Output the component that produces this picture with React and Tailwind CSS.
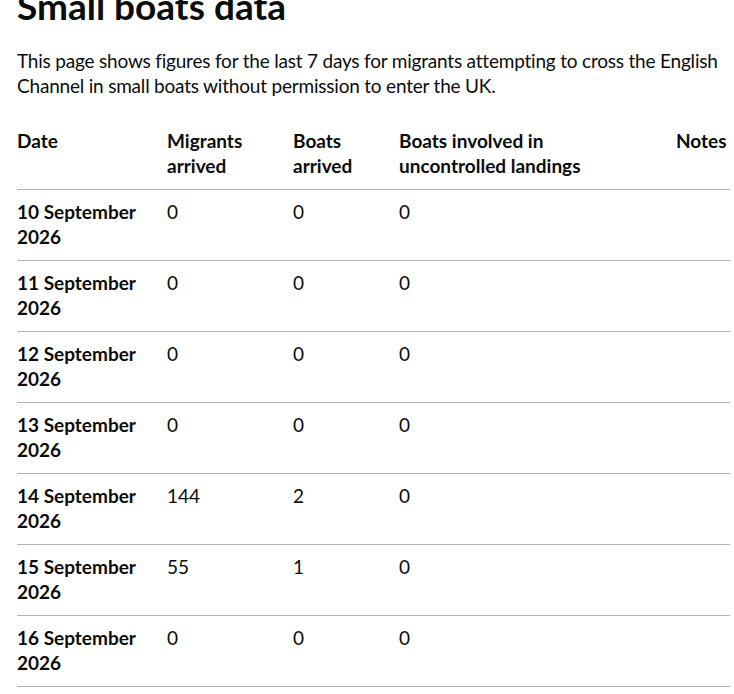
import React from "react";

const rows = [
  ["10 September 2026", "0", "0", "0"],
  ["11 September 2026", "0", "0", "0"],
  ["12 September 2026", "0", "0", "0"],
  ["13 September 2026", "0", "0", "0"],
  ["14 September 2026", "144", "2", "0"],
  ["15 September 2026", "55", "1", "0"],
  ["16 September 2026", "0", "0", "0"],
];

export default function App() {
  return (
    <div
      className="bg-white text-[#0b0c0c] pl-[17px] w-[730px] overflow-hidden"
      style={{ fontFamily: 'Lato, "Liberation Sans", Arial, sans-serif' }}
    >
      <h1 className="text-[37px] leading-[40px] font-bold mt-[-14px] mb-[22px]">Small boats data</h1>
      <p className="text-[19px] leading-[25px] mb-[21px] tracking-[-0.2px]">
        This page shows figures for the last 7 days for migrants attempting to cross the English Channel in small
        boats without permission to enter the UK.
      </p>
      <table className="w-[713px] table-fixed border-collapse text-[19px] leading-[25px]">
        <colgroup>
          <col className="w-[150px]" />
          <col className="w-[126px]" />
          <col className="w-[106px]" />
          <col className="w-[277px]" />
          <col />
        </colgroup>
        <thead>
          <tr className="border-b border-[#b1b4b6]">
            <th className="text-left align-top font-bold pt-[9px] pb-[11px] pr-[20px]">Date</th>
            <th className="text-left align-top font-bold pt-[9px] pb-[11px] pr-[20px]">Migrants arrived</th>
            <th className="text-left align-top font-bold pt-[9px] pb-[11px] pr-[20px]">Boats arrived</th>
            <th className="text-left align-top font-bold pt-[9px] pb-[11px] pr-[20px]">
              Boats involved in
              <br />
              uncontrolled landings
            </th>
            <th className="text-left align-top font-bold pt-[9px] pb-[11px]">Notes</th>
          </tr>
        </thead>
        <tbody>
          {rows.map((r) => (
            <tr key={r[0]} className="border-b border-[#b1b4b6]">
              <th className="text-left align-top font-bold pt-[9px] pb-[11px] pr-[20px]">{r[0]}</th>
              <td className="align-top pt-[9px] pb-[11px] pr-[20px]">{r[1]}</td>
              <td className="align-top pt-[9px] pb-[11px] pr-[20px]">{r[2]}</td>
              <td className="align-top pt-[9px] pb-[11px] pr-[20px]">{r[3]}</td>
              <td className="align-top pt-[9px] pb-[11px]"></td>
            </tr>
          ))}
        </tbody>
      </table>
    </div>
  );
}
